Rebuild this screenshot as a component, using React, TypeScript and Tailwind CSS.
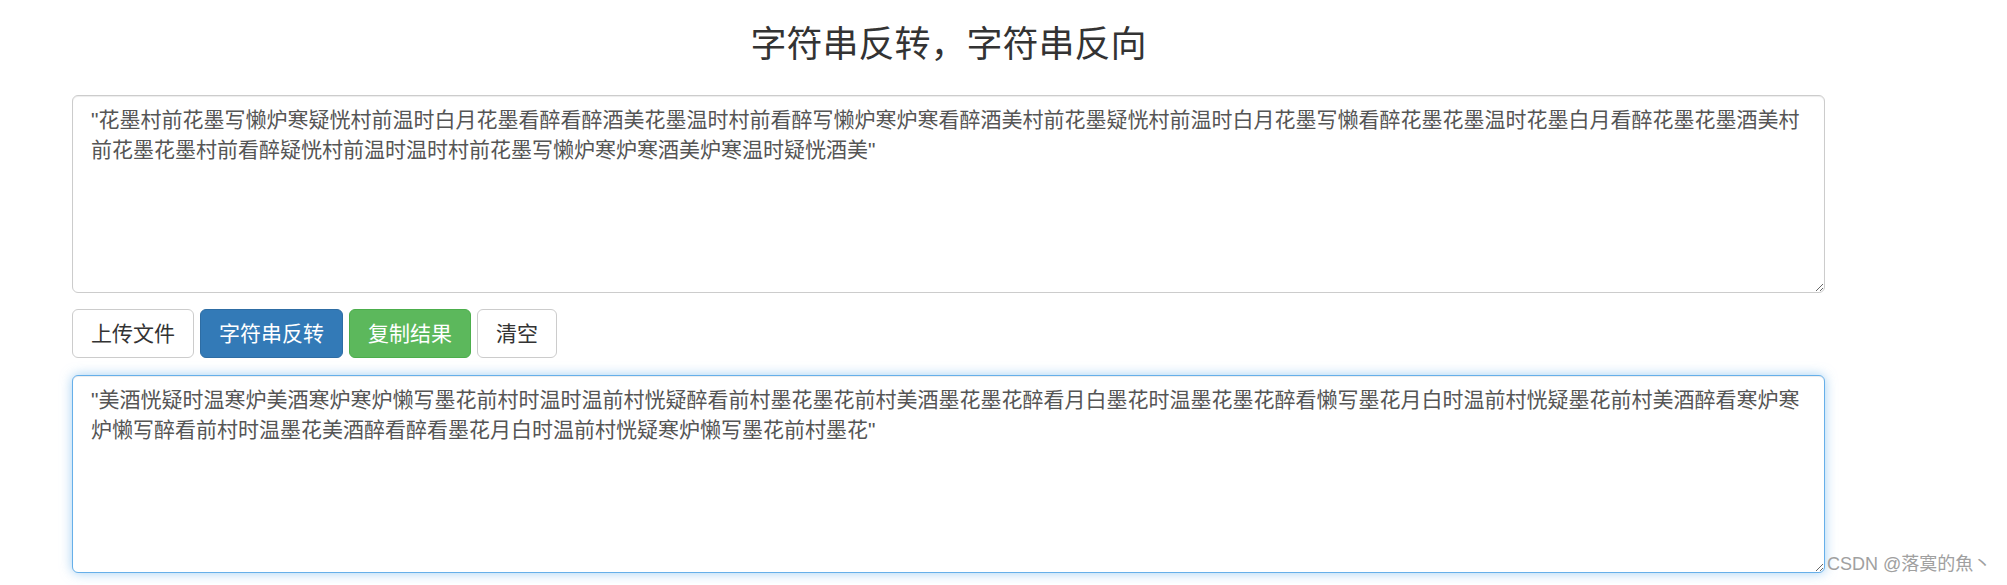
import React from "react";

const INPUT =
  '"花墨村前花墨写懒炉寒疑恍村前温时白月花墨看醉看醉酒美花墨温时村前看醉写懒炉寒炉寒看醉酒美村前花墨疑恍村前温时白月花墨写懒看醉花墨花墨温时花墨白月看醉花墨花墨酒美村前花墨花墨村前看醉疑恍村前温时温时村前花墨写懒炉寒炉寒酒美炉寒温时疑恍酒美"';
const OUTPUT =
  '"美酒恍疑时温寒炉美酒寒炉寒炉懒写墨花前村时温时温前村恍疑醉看前村墨花墨花前村美酒墨花墨花醉看月白墨花时温墨花墨花醉看懒写墨花月白时温前村恍疑墨花前村美酒醉看寒炉寒炉懒写醉看前村时温墨花美酒醉看醉看墨花月白时温前村恍疑寒炉懒写墨花前村墨花"';

const font = { fontFamily: '"Liberation Sans", "Noto Sans CJK SC", sans-serif' };

export default function App() {
  return (
    <div
      className="relative h-[585px] w-[2007px] overflow-hidden bg-white text-[#333]"
      style={font}
    >
      <div className="ml-[72px] flex w-[1753px] flex-col">
        <h3 className="mt-[25px] text-center text-[36px] font-normal leading-[40px] text-[#333]">
          字符串反转，字符串反向
        </h3>
        <textarea
          readOnly
          value={INPUT}
          className="mt-[30px] h-[198px] w-full resize-y rounded-[6px] border border-[#ccc] bg-white px-[18px] py-[9px] text-[21px] leading-[30px] text-[#555] shadow-[inset_0_1px_1px_rgba(0,0,0,0.075)] outline-none"
        />
        <div className="mt-[16px] flex gap-[6px]">
          <button className="flex h-[49px] items-center rounded-[6px] border border-[#ccc] bg-white px-[18px] text-[21px] leading-[30px] text-[#333]">
            上传文件
          </button>
          <button className="flex h-[49px] items-center rounded-[6px] border border-[#2e6da4] bg-[#337ab7] px-[18px] text-[21px] leading-[30px] text-white">
            字符串反转
          </button>
          <button className="flex h-[49px] items-center rounded-[6px] border border-[#4cae4c] bg-[#5cb85c] px-[18px] text-[21px] leading-[30px] text-white">
            复制结果
          </button>
          <button className="flex h-[49px] items-center rounded-[6px] border border-[#ccc] bg-white px-[18px] text-[21px] leading-[30px] text-[#333]">
            清空
          </button>
        </div>
        <textarea
          readOnly
          value={OUTPUT}
          className="mt-[17px] h-[198px] w-full resize-y rounded-[6px] border border-[#66afe9] bg-white px-[18px] py-[9px] text-[21px] leading-[30px] text-[#555] shadow-[inset_0_1px_1px_rgba(0,0,0,0.075),0_0_12px_rgba(102,175,233,0.6)] outline-none"
        />
      </div>
      <div className="absolute left-[1827px] top-[552px] whitespace-nowrap text-[18px] leading-[24px] text-[#a0a0a0]">
        CSDN @落寞的魚丶
      </div>
    </div>
  );
}
